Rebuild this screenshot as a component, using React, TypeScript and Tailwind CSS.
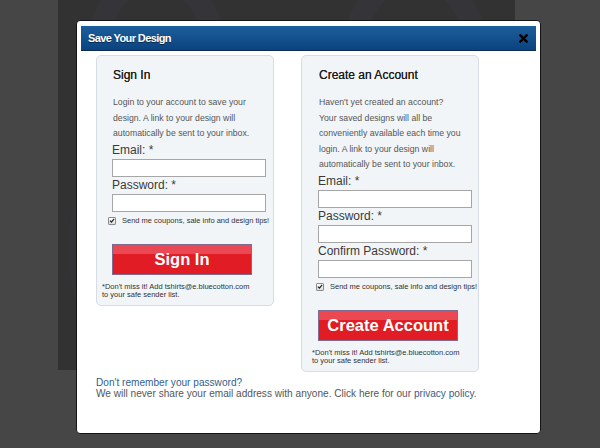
import React from "react";

const F = { fontFamily: '"Liberation Sans", Arial, sans-serif' };

function Check() {
  return (
    <span className="flex h-[8px] w-[8px] shrink-0 items-center justify-center rounded-[1px] border border-[#8c8c8c] bg-gradient-to-b from-white to-[#dcdcdc]">
      <svg viewBox="0 0 10 10" className="h-[7px] w-[7px]">
        <path d="M1.6 5.2 L4 7.7 L8.6 2.2" stroke="#1e1e1e" strokeWidth="2" fill="none" />
      </svg>
    </span>
  );
}

function Field({ label }: { label: string }) {
  return (
    <div className="flex flex-col">
      <div className="h-[17px] whitespace-nowrap text-[12px] leading-[17px] text-[#3a3a3a]">{label}</div>
      <input className="h-[18px] w-[154px] border border-[#a6a6a6] bg-white outline-none" />
    </div>
  );
}

function RedButton({ text }: { text: string }) {
  return (
    <button className="flex h-[31px] w-[140px] items-center justify-center border border-[#7d6b92] bg-[linear-gradient(to_bottom,#ea4853_0%,#ea4853_32%,#e11c24_32%,#e11c24_100%)] text-[16.5px] font-bold leading-none text-white">
      {text}
    </button>
  );
}

function Panel({
  title,
  lines,
  fields,
  button,
  padL,
  chkL,
  noteL,
}: {
  title: string;
  lines: string[];
  fields: string[];
  button: string;
  padL: string;
  chkL: string;
  noteL: string;
}) {
  return (
    <div className="flex w-[178px] flex-col rounded-[5px] border border-[#d6dde5] bg-[#f2f5f8] pb-[6px] pt-[11px]">
      <div className={`${padL} text-[12px] leading-[17px] text-[#1c1c1c] [text-shadow:0_0_0.4px_#333]`}>{title}</div>
      <div className={`${padL} mt-[11px] whitespace-nowrap text-[8.7px] leading-[15.5px] text-[#555]`}>
        {lines.map((l, i) => (
          <div key={i}>{l}</div>
        ))}
      </div>
      <div className={`${padL} -ml-px flex flex-col`}>
        {fields.map((f) => (
          <Field key={f} label={f} />
        ))}
      </div>
      <div className={`${chkL} mt-[4px] flex h-[10px] items-center gap-[6px]`}>
        <Check />
        <span className="whitespace-nowrap text-[7.5px] text-[#333]">Send me coupons, sale info and design tips!</span>
      </div>
      <div className={`${padL} -ml-px mt-[18px]`}>
        <RedButton text={button} />
      </div>
      <div className={`${noteL} mt-[8px] whitespace-nowrap text-[7.5px] leading-[8px] text-[#333]`}>
        <div>*Don't miss it! Add tshirts@e.bluecotton.com</div>
        <div>to your safe sender list.</div>
      </div>
    </div>
  );
}

export default function App() {
  return (
    <div className="relative h-[448px] w-[600px] overflow-hidden bg-[#464646]" style={F}>
      <div className="relative ml-[58px] h-[370px] w-[457px] overflow-hidden bg-[#323232]">
        <svg className="absolute inset-0" width="457" height="370">
          <ellipse cx="98" cy="70" rx="62" ry="95" fill="none" stroke="#353439" strokeWidth="22" />
          <ellipse cx="357" cy="70" rx="65" ry="95" fill="none" stroke="#353439" strokeWidth="22" />
          <ellipse cx="150" cy="250" rx="130" ry="150" fill="none" stroke="#343338" strokeWidth="20" />
        </svg>
      </div>

      <div className="absolute left-[76px] top-[20px] flex h-[414px] w-[465px] flex-col rounded-[4px] border border-[#151515] bg-white p-[4px] pt-[5px]">
        <div className="flex h-[25px] items-center justify-between border-b border-[#0b2c55] bg-gradient-to-b from-[#1d5e9c] to-[#0a437f] pl-[7px] pr-[8px]">
          <span className="text-[11px] font-bold tracking-[-0.6px] text-white [text-shadow:0_1px_0_#06284c]">
            Save Your Design
          </span>
          <svg viewBox="0 0 10 10" className="h-[9px] w-[9px]">
            <path d="M1.5 1.5 L8.5 8.5 M8.5 1.5 L1.5 8.5" stroke="#000" strokeWidth="2.6" strokeLinecap="square" />
          </svg>
        </div>

        <div className="mt-[4px] flex items-start gap-[27px] pl-[15px]">
          <Panel
            title="Sign In"
            lines={[
              "Login to your account to save your",
              "design. A link to your design will",
              "automatically be sent to your inbox.",
            ]}
            fields={["Email: *", "Password: *"]}
            button="Sign In"
            padL="pl-[16px]"
            chkL="pl-[11px]"
            noteL="pl-[5px]"
          />
          <Panel
            title="Create an Account"
            lines={[
              "Haven't yet created an account?",
              "Your saved designs will all be",
              "conveniently available each time you",
              "login. A link to your design will",
              "automatically be sent to your inbox.",
            ]}
            fields={["Email: *", "Password: *", "Confirm Password: *"]}
            button="Create Account"
            padL="pl-[17px]"
            chkL="pl-[14px]"
            noteL="pl-[10px]"
          />
        </div>

        <div className="mt-[5px] pl-[15px] text-[10.1px] leading-[11.5px] text-[#555]">
          <div className="text-[#34608e]">Don't remember your password?</div>
          <div>
            We will never share your email address with anyone. Click here for our{" "}
            <span className="text-[#34608e]">privacy policy</span>.
          </div>
        </div>
      </div>
    </div>
  );
}
